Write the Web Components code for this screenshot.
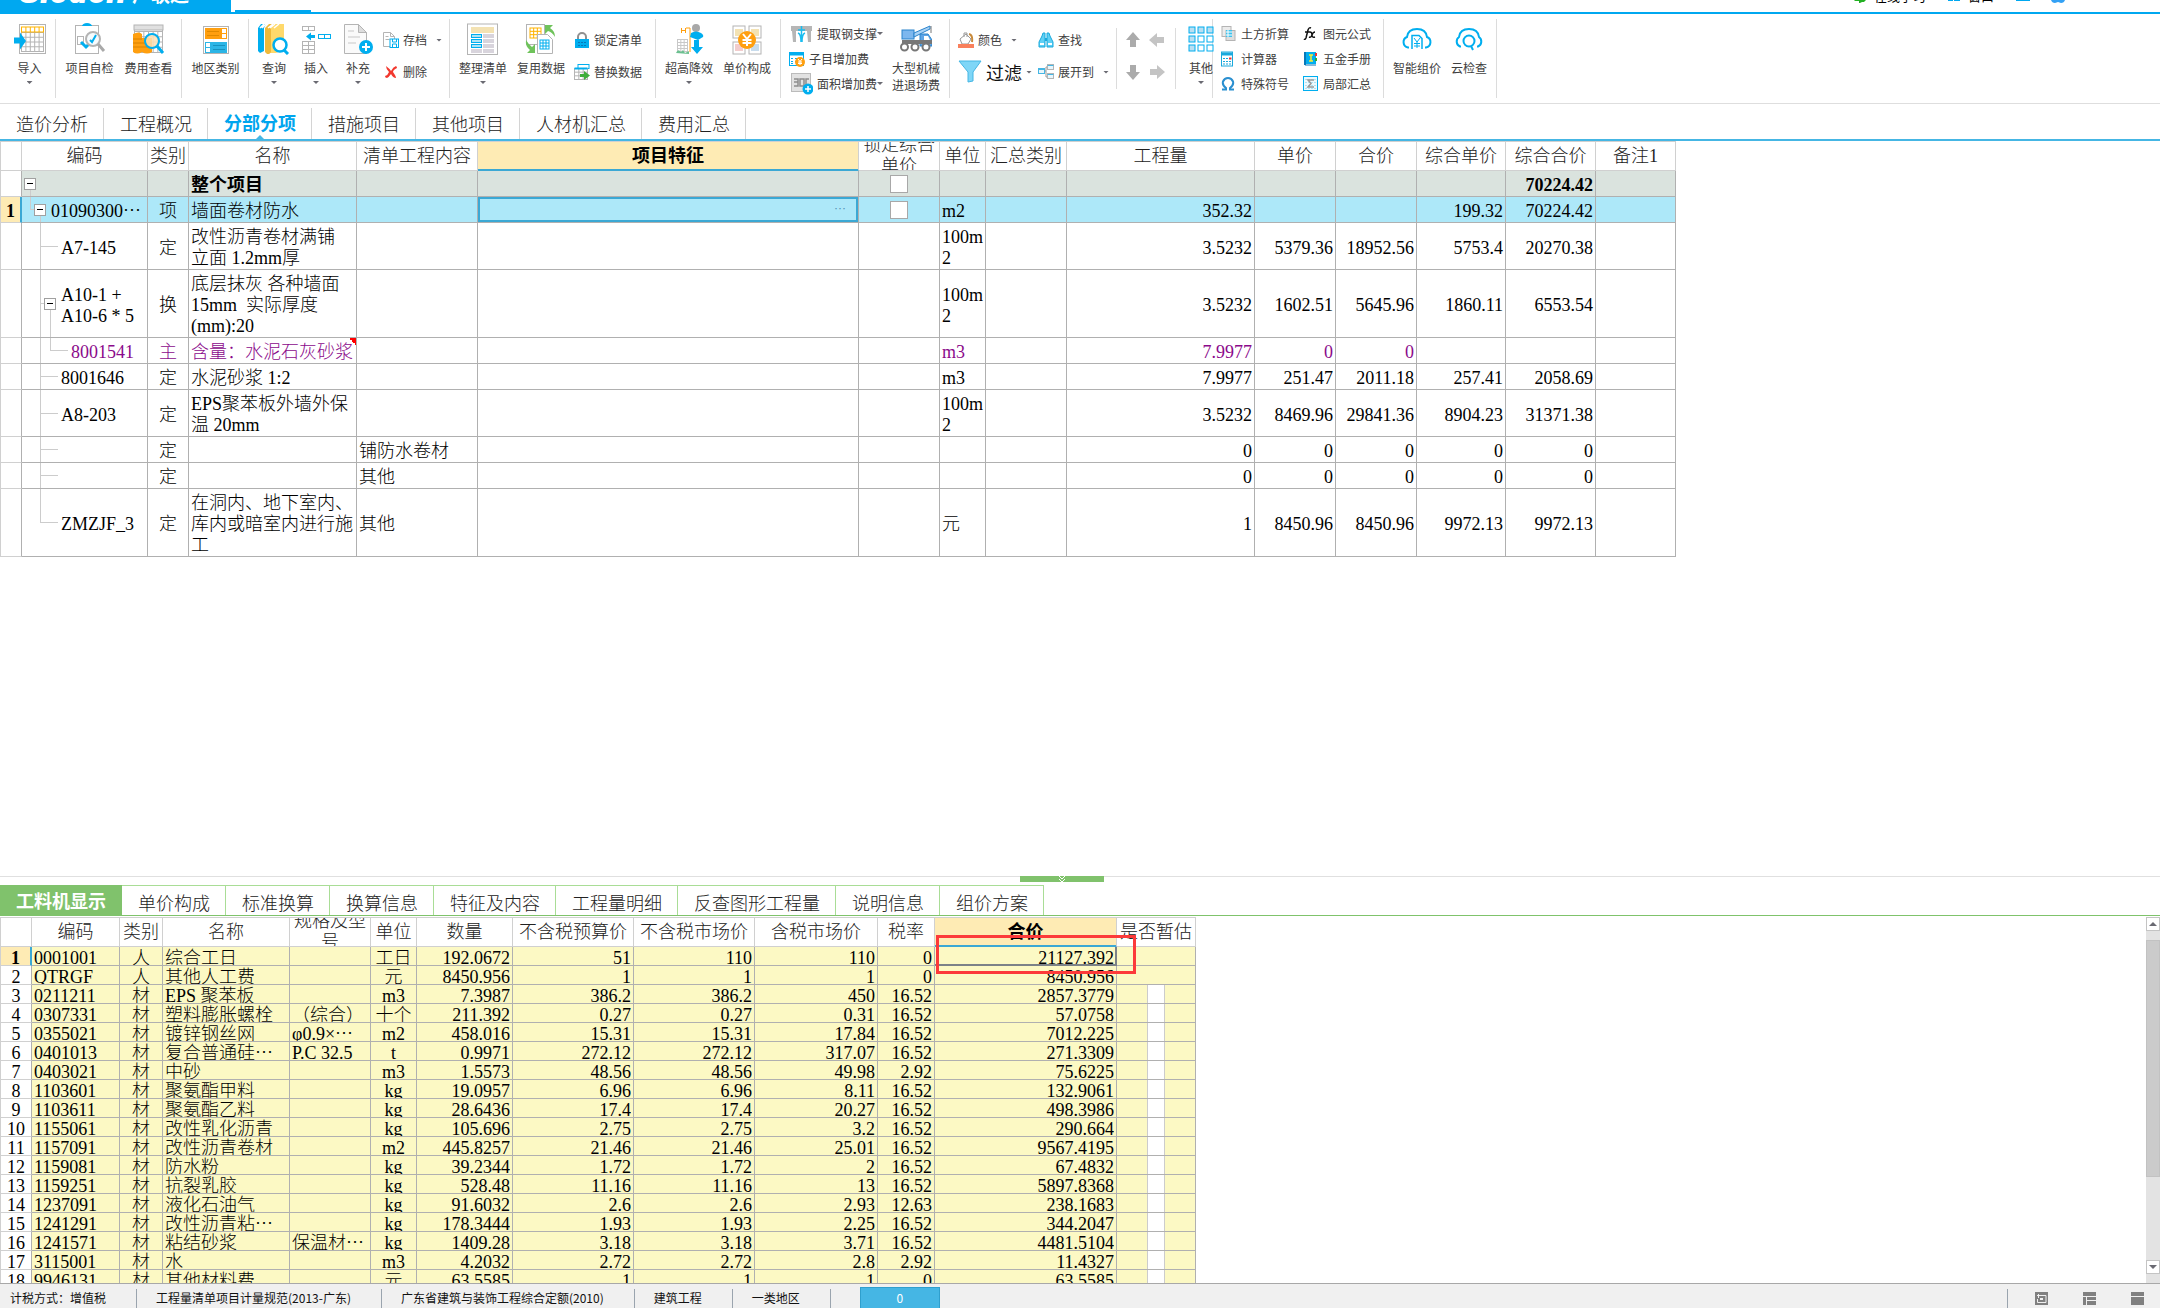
<!DOCTYPE html>
<html lang="zh-CN">
<head>
<meta charset="utf-8">
<title>分部分项</title>
<style>
html,body{height:100%}
body{margin:0;background:#fff;color:#000;font:12px/16px "Noto Sans CJK SC",sans-serif;overflow:hidden}
gb-app{height:100%}
</style>
</head>
<body>
<gb-app></gb-app>
<script>
const G='#b4b4b4',B='#00aeef',O='#ff9f0f',LB='#45b6e4',Y='#f3e2b3';
const grid=(x,y,w,h,nx,ny,c,f='#fff')=>{let s=`<rect x="${x}" y="${y}" width="${w}" height="${h}" fill="${f}" stroke="${c}"/>`;
  for(let i=1;i<nx;i++)s+=`<path d="M${x+w*i/nx} ${y}v${h}" stroke="${c}"/>`;
  for(let i=1;i<ny;i++)s+=`<path d="M${x} ${y+h*i/ny}h${w}" stroke="${c}"/>`;return s;};
const cells=(list,w,h)=>list.map(([x,y,s,f])=>`<rect x="${x}" y="${y}" width="${w}" height="${h}" fill="${f||'#fff'}" stroke="${s}"/>`).join('');
// Icon table: [width, height, markup]
const ICONS={
 import:[32,32,`<rect x="5.500" y="1.500" width="26" height="29" fill="#fff" stroke="${G}"/>`+grid(7.5,9.5,22,19,5,4,G)+grid(7.5,4,22,5,5,1,'#ffb400')+`<path d="M0 15h6v-5l6 8.500-6 8.500v-6H0z" transform="translate(0 -.5)" fill="${B}"/>`],
 check:[32,32,`<rect x="1.500" y="2.500" width="23" height="28" fill="#fff" stroke="${G}"/><path d="M8 3a5 3 0 0 1 10 0z" fill="${B}"/><rect x="3.500" y="13.500" width="6" height="8" fill="none" stroke="${G}"/><path d="M7 19l5 5 4-4" fill="none" stroke="${B}" stroke-width="3"/><circle cx="19" cy="16" r="7" fill="#f7fbfd" stroke="${G}" stroke-width="2"/><path d="M24 21l6 7" stroke="#a9a9a9" stroke-width="3"/><path d="M16 17l2 2 4-7" fill="none" stroke="${B}" stroke-width="2"/>`],
 fee:[32,32,`<rect x="1.500" y="2.500" width="28" height="27" fill="#fff" stroke="${G}"/>`+grid(1.5,8.5,28,21,6,4,G)+`<rect x="1" y="2" width="29" height="5" fill="#e0e0e0" stroke="${G}"/><path d="M0 11q6-3 9 0v18q-5 3-9 0zM9 15h10v14q-5 3-10 0z" fill="${O}"/><path d="M0 16h9M0 20h9M0 24h19M9 20h10" stroke="#d98200"/><circle cx="19" cy="18" r="7" fill="#fbe2b8" fill-opacity=".85" stroke="${B}" stroke-width="2"/><path d="M24 23l6 7" stroke="${B}" stroke-width="3"/>`],
 region:[32,32,`<rect x="3.500" y="3.500" width="25" height="27" fill="#fff" stroke="${G}"/><rect x="5" y="5" width="22" height="11" fill="${O}"/><rect x="21.500" y="5.500" width="5" height="10" fill="#fff" stroke="${O}"/><path d="M21 10.500h6" stroke="${O}"/><path d="M7 8.500h12M7 12.500h12" stroke="#e08a00"/><rect x="5" y="19" width="22" height="11" fill="#2bb5e6"/><rect x="5.500" y="19.500" width="5" height="10" fill="#fff" stroke="#2bb5e6"/><path d="M5 24.500h6" stroke="#2bb5e6"/><path d="M13 22.500h12M13 26.500h12" stroke="#1692c0"/>`],
 query:[32,32,`<path d="M0 5l3-4h5l-2 4v23l-4 2-2-2z" fill="${B}"/><path d="M7 5l4-4h6l-2 4v23l-4 3H9l-2-2z" fill="#f0b93a"/><path d="M13 5l4-4h9v25l-8 4h-5z" fill="#ffd96b"/><path d="M2 5l4-4M4 5l4-4M10 5l5-4M12 5l5-4M16 5l5-4" stroke="#fff" stroke-width="1.500"/><circle cx="22" cy="22" r="6.500" fill="#fff" stroke="${B}" stroke-width="2.500"/><path d="M26 27l4 4" stroke="${B}" stroke-width="3"/>`],
 insert:[32,32,cells([[2.5,3.5,G],[8.500,3.500,G]],6,4)+cells([[18.500,11.500,B],[24.500,11.500,B]],6,4)+cells([[2.500,18.500,G],[8.500,18.500,G],[2.500,22.500,G],[8.500,22.500,G],[2.500,26.500,G],[8.500,26.500,G]],6,4)+`<path d="M6 13.500l5-4v2.500h4v3h-4v2.500z" fill="${B}"/>`],
 supply:[32,32,`<path d="M2.500 1.500h14l8 8v21h-22z" fill="#fafafa" stroke="${G}"/><path d="M16.500 1.500v8h8z" fill="#ddd" stroke="${G}"/><path d="M6 8h6M6 14h12M6 20h8" stroke="#c8c8c8"/><circle cx="24" cy="24" r="7" fill="${B}"/><path d="M24 20v8M20 24h8" stroke="#fff" stroke-width="2"/>`],
 save:[16,16,`<path d="M.5.5h7l4 4v10H.5z" fill="#fff" stroke="${G}"/><path d="M7.500.5v4h4M2.500 4.500h3M2.500 7.500h4" fill="none" stroke="${G}"/><rect x="7" y="7" width="8.500" height="8.500" fill="#fff" stroke="${B}"/><path d="M9.500 7v3h4V7M9.500 15v-3h4v3" fill="none" stroke="${B}"/>`],
 del:[16,16,`<path d="M3 2q4 3 5 5 2-4 5-5 1 1 1 2-4 2-4 4 3 4 3 6-3 0-5-4-2 3-4 4-2 0-2-2 3-1 4-4-3-3-3-6z" fill="#f2382e"/>`],
 arrange:[32,32,`<rect x=".5" y="1" width="30" height="30.500" fill="#fff" stroke="${G}"/><rect x="4" y="4" width="23" height="6" fill="${Y}"/>`+cells([[4.500,11.500,B,'#ade3f5'],[4.500,16.500,B,'#ade3f5'],[4.500,21.500,B,'#ade3f5']],10,3)+`<path d="M16 13h11M16 18h11M16 23h11M16 28h11M4 28h11" stroke="#d8d4dc" stroke-width="4"/>`],
 reuse:[32,32,`<rect x="1.500" y="1.500" width="18" height="20" fill="#fff" stroke="${G}"/>`+grid(5,5,11,10,3,3,'#ffb400')+`<path d="M12.500 11.500h10l5 5v14h-15z" fill="#fff" stroke="${G}"/>`+grid(15,17,9,9,3,3,B)+`<path d="M20 2h8l-3 3q5 3 5 9-3-5-7-6l-3 3z" fill="#6fc35b"/><path d="M10 30H2l3-3q-5-4-4-10 3 5 6 7l3-3z" fill="#6fc35b"/>`],
 lock:[16,16,`<path d="M4 8V5a4 4 0 0 1 8 0v3" fill="none" stroke="#909090" stroke-width="2"/><rect x="1" y="7" width="14" height="9" fill="${B}"/><path d="M4 10.500h8M4 13.500h8" stroke="#0878b8" stroke-dasharray="2 1"/>`],
 replace:[16,16,`<rect x="4" y=".5" width="11" height="4" fill="#fff" stroke="${B}"/>`+grid(.5,4.500,13,11,3,3,G)+`<path d="M.5 4.500h13" stroke="${B}" stroke-width="2"/><path d="M6 10h4V7l6 4.500-6 4.500v-3H6z" fill="#3fae3a"/>`],
 high:[32,32,`<path d="M8.500 5v5M12.500 5v5M8.500 7.500h4M13 5h4v24" fill="none" stroke="#ff9f0f"/>`+grid(4.500,16.500,10,12,3,4,'#c8c8c8')+`<path d="M3 30q2-5 5-1l2-2 2 3 4-2v3z" fill="#6cc090"/><circle cx="23" cy="5" r="4" fill="#a8a8a8"/><path d="M18 10q5-3 10 0 3 2 2 4l-5 3-8-3z" fill="${B}"/><path d="M21 17h5v7h4l-6 7-6-7h3z" fill="${B}"/>`],
 compose:[32,32,cells([[2,3,G],[18,3,G],[2,19,G],[18,19,G]],12,12)+`<rect x="4" y="6" width="8" height="7" fill="${Y}"/><rect x="20" y="6" width="8" height="7" fill="${Y}"/><rect x="4" y="21" width="8" height="7" fill="#f2cccc"/><rect x="20" y="21" width="8" height="7" fill="#c8dced"/><circle cx="16" cy="17" r="9" fill="${O}"/><path d="M12 11l4 5 4-5M16 16v7M11.500 17h9M11.500 20h9" fill="none" stroke="#fff" stroke-width="2"/>`],
 steel:[24,18,`<path d="M2 1h21v5H2zM3 6h4v11H4zM18 6h4v11h-3z" fill="#b6b6b6"/><path d="M12.500 1v16M9 8q3 1 3 9M16 8q-3 1-3 9M9 5h7" stroke="#19bdf0" stroke-width="1.500" fill="none"/>`],
 subfee:[16,16,`<rect x=".5" y="1.500" width="14" height="13" fill="#fff" stroke="${B}"/><path d="M0 3h15" stroke="${B}" stroke-width="3"/><path d="M2 7.500h2M6 7.500h7M2 10.500h2M6 10.500h3M2 12.500h2" stroke="${B}"/><circle cx="11" cy="11" r="5" fill="${O}"/><path d="M9 8l2 2.500L13 8M11 10.500V14M9 11h4M9 12.500h4" fill="none" stroke="#fff"/>`],
 area:[24,22,`<rect x="2.500" y=".5" width="19" height="18" fill="#e2e2e2" stroke="#bbb"/><path d="M5 6h4v7H5M5 9h4M11 6h4v7h-4zM17 13V6h3" fill="none" stroke="#8d8d8d" stroke-width="1.500"/><circle cx="19" cy="16" r="5.500" fill="${B}"/><path d="M19 13v6M16 16h6" stroke="#fff" stroke-width="1.500"/>`],
 crane:[32,32,`<rect x="2" y="7" width="12" height="9" fill="#7db7ee" stroke="#2b83cc"/><path d="M14 10L30 3v3l-16 8z" fill="#a9d2f5" stroke="#2b83cc"/><path d="M31 3v7" stroke="#777"/><path d="M20 11h8l4 6v6H20z" fill="#5da4e6" stroke="#2b83cc"/><path d="M24 13h4l2 4h-6z" fill="#fff"/><path d="M2 19h30" stroke="#777" stroke-width="4"/><g fill="#fff" stroke="#777" stroke-width="2"><circle cx="4.500" cy="24" r="3.500"/><circle cx="15" cy="24" r="3.500"/><circle cx="26" cy="24" r="3.500"/></g>`],
 color:[16,16,`<path d="M2 7l6-5 5 5-3 5H4z" fill="#fff" stroke="#999"/><path d="M6 5V1h3v4" fill="none" stroke="#999"/><path d="M11 2q4 1 3 8" fill="none" stroke="#c98a3a" stroke-width="2"/><path d="M0 12h16v4H0z" fill="#f9805c"/>`],
 filter:[24,24,`<path d="M1 1h22l-8 11v9l-5 1V12z" fill="#7fd6f7" stroke="#45b6e4"/>`],
 find:[16,16,`<path d="M5 1h2v14H1V10l3-6zM11 1H9v14h6V10l-3-6z" fill="#5fd0f5" stroke="#1aa9dc"/><path d="M7 6h2v3H7z" fill="#1aa9dc"/><path d="M2 12h4M10 12h4" stroke="#fff" stroke-width="2"/>`],
 expand:[16,16,`<path d="M5 7h3M8 3v10M8 3h2M8 13h2" stroke="#999" fill="none"/>`+cells([[.5,4.500,LB,'#e8f6fc'],[9.500,.5,G,'#e8f6fc'],[9.500,9.500,G,'#e8f6fc']],6,5)+`<path d="M.5 5.500h6M9.500 1.500h6M9.500 10.500h6" stroke="#45b6e4"/>`],
 other:[26,26,cells([[1,1,B,'#b9dff2'],[10,1,B,'#b9dff2'],[19,1,B,'#b9dff2'],[1,10,B,'#b9dff2'],[10,10,B],[19,10,B],[1,19,B,'#b9dff2'],[10,19,B],[19,19,B]],6,6)],
 earth:[16,16,cells([[1,.5,G,'#ececec'],[5,4.500,G,'#dedede']],9,10)+`<rect x="5" y="4" width="6" height="7" fill="#3ec1ec"/><path d="M5 6h6M5 9h6M7 4v7" stroke="#fff"/>`],
 calc:[16,16,`<rect x=".5" y="1" width="11" height="14" fill="#fff" stroke="#1aa9dc"/><path d="M0 3h12" stroke="#1aa9dc" stroke-width="3"/><path d="M2 7.500h2m1 0h2M2 10.500h2m1 0h2m1 0h2M2 13h2m1 0h2m1 0h2" stroke="#1aa9dc"/><path d="M8 7.500h2.500" stroke="#e33" stroke-width="2"/>`],
 omega:[16,16,`<path d="M1 13.500h4V12Q1 9 2 5.500 3.500 2 7 2t5 3.500Q13 9 9 12v1.500h4" fill="none" stroke="#2a8fd0" stroke-width="2"/>`],
 fx:[16,16,`<path d="M8 2q-2-1-3 2L3 12q-1 2-2 1M2 6h5" fill="none" stroke="#111" stroke-width="1.500"/><path d="M7 6q2 0 2 3t3 2M12 6q-2 0-3 3t-3 2" fill="none" stroke="#111" stroke-width="1.500"/>`],
 book:[16,16,`<rect x="1" y="1" width="2" height="13" fill="#0878b8"/><rect x="3" y="1" width="10" height="12" fill="${B}"/><path d="M2 14h11" stroke="#0878b8"/><path d="M6 4h4M8 4v6M6 10h4" stroke="#f5ec3a" stroke-width="1.500"/><path d="M13 2v3" stroke="#e33" stroke-width="2"/><path d="M13 7v3" stroke="#3a3" stroke-width="2"/>`],
 sum:[16,16,`<rect x=".5" y=".5" width="14" height="14" fill="#eef9fd" stroke="${B}"/><path d="M2 3.500h11M2 6.500h11M2 9.500h11M2 12.500h11" stroke="#aee2f4" stroke-dasharray="2 1"/><path d="M11 4H5l3 3.500L5 11h6" fill="none" stroke="#999" stroke-width="1.500"/>`],
 aiprice:[32,32,`<path d="M8 24.500H7A5.500 5.500 0 0 1 6 14Q7 6 16 6t10 8a5.500 5.500 0 0 1-1 10.500h-1" fill="none" stroke="${B}" stroke-width="2"/><path d="M11 26V12.500h7l3 3V26" fill="none" stroke="${B}" stroke-width="1.500"/><path d="M13 15l3 4 3-4M16 19v6M13 20.500h6M13 23h6" fill="none" stroke="${B}"/>`],
 cloud:[32,32,`<path d="M8 23.500H7A5.500 5.500 0 0 1 6 14Q7 6 16 6t10 8a5.500 5.500 0 0 1-1 9.500h-1" fill="none" stroke="${B}" stroke-width="2"/><circle cx="16" cy="18" r="5.500" fill="none" stroke="${B}" stroke-width="2"/><path d="M18 23l2 4" stroke="${B}" stroke-width="2"/>`],
 up:[16,16,`<path d="M8 0l7 8h-4v7H5V8H1z" fill="#ababab"/>`],
 down:[16,16,`<path d="M8 16l7-8h-4V1H5v7H1z" fill="#ababab"/>`],
 left:[16,16,`<path d="M0 8l8-7v4h7v6H8v4z" fill="#c4c4c4"/>`],
 right:[16,16,`<path d="M16 8L8 1v4H1v6h7v4z" fill="#c4c4c4"/>`],
 win:[13,13,`<path d="M0 0h13v13H0z" fill="#808080"/><path d="M2 3.500h4M3.500 2v4M6 3.500h5v7H2.500V7" fill="none" stroke="#f0f0f0"/><path d="M5 6h3v2H5z" fill="#f0f0f0"/>`],
 outline:[13,13,`<path d="M0 0h13v4H0zM0 5h3v8H0zM4 5h9v3H4zM4 9h9v4H4z" fill="#808080"/>`],
 panel:[13,13,`<path d="M0 0h13v4H0zM0 5h13v8H0z" fill="#808080"/>`]
};
const icon=n=>{const[w,h,m]=ICONS[n];return `<svg width="${w}" height="${h}" viewBox="0 0 ${w} ${h}" aria-hidden="true">${m}</svg>`;};
const CSS=`*{box-sizing:border-box}button{font:inherit;color:inherit;background:none;border:0;margin:0;padding:0;white-space:nowrap}svg{display:block;flex:none}`;
const SONG=`"Liberation Serif","Noto Sans CJK SC",serif`;
const define=(name,render)=>customElements.define(name,class extends HTMLElement{
  connectedCallback(){if(!this.shadowRoot)this.attachShadow({mode:'open'}).innerHTML=`<style>${CSS}</style>`+render(this);}
});

define('gb-tool',el=>{
  const n=el.getAttribute('icon'),caret=el.hasAttribute('caret')?'<i></i>':'';
  return `<style>
  :host{display:block;flex:none;color:#404040}
  i{width:6px;height:3px;flex:none;background:#6a6a72;clip-path:polygon(0 0,100% 0,50% 100%)}
  button{display:flex;align-items:center}
  :host([big]) button{flex-direction:column;width:var(--w,58px);padding-top:4px}
  :host([big]) .ic{height:32px;display:flex;align-items:center}
  :host([big]) .tx{margin-top:4px;line-height:17px}
  :host([big]) i{margin-top:5px}
  :host(:not([big])) button{height:var(--rh,32px);gap:4px}
  :host([tight]) button{gap:0}
  :host([tight]) .tx{margin-left:4px}
  :host([spread]) i{margin-left:5px}
  :host([large]) .tx{font-size:18px;color:#111}
  </style><button type="button" ${el.title?`aria-label="${el.title}"`:''}><span class="ic">${icon(n)}</span><span class="tx"><slot></slot></span>${caret}</button>`;
});
define('gb-group',()=>`<style>
  :host{display:flex;flex:none;height:79px;padding-left:4px;border-right:1px solid #dcdcdc}
  :host([short]){border:0;background:linear-gradient(#dcdcdc,#dcdcdc) 100% 9px/1px 61px no-repeat}
</style><slot></slot>`);
define('gb-stack',el=>`<style>:host{display:flex;flex-direction:column;padding:var(--pt,5px) 0 0 4px;flex:none}</style><slot></slot>`);

define('gb-titlebar',()=>`<style>
  :host{display:flex;height:14px;flex:none;border-bottom:2px solid #00a8f0;overflow:hidden;align-items:flex-end}
  .brand{display:flex;align-items:flex-end;width:231px;height:12px;background:#00a8f0;color:#fff;padding-left:17px;overflow:hidden;gap:6px}
  b{font:italic 900 35px/12px Roboto,sans-serif}
  .cn{font-size:19px;font-weight:700;line-height:12px}
  b,.cn{height:26px;white-space:nowrap}
  .cn{height:24px}
  .page{width:76px;height:2px;margin-left:4px;background:#00a8f0}
  .links{margin-left:auto;display:flex;align-items:flex-end;height:12px;overflow:hidden;padding-right:95px;font-size:13px}
  .links span{height:24px;line-height:16px;margin:0 22px 0 8px}
  .links svg{align-self:flex-start}
  </style><div class="brand"><b>Glodon</b><span class="cn">广联达</span></div><div class="page"></div>
  <div class="links"><svg width="12" height="4"><path d="M0 0h12l-2 2H8l-2 1H5V1H1z" fill="#22b022"/></svg><span>在线学习</span>
  <svg width="12" height="2"><path d="M0 0h5v1H0zM6 0h6v1H6z" fill="#00a8f0"/></svg><span>窗口</span>
  <svg width="35" height="2"><path d="M0 0h14v1H0z" fill="#00a8f0"/></svg><svg width="14" height="4"><path d="M0 0h14q-1 3-4 3L7 2 4 3Q1 3 0 0z" fill="#33a1f5"/></svg></div>`);

define('gb-ribbon',()=>`<style>
  :host{display:flex;height:90px;flex:none;padding:5px 0;border-bottom:1px solid #dedede}
  .c3{--rh:25px;--pt:2px}
  .w42{--w:42px}.w59{--w:59px}
  .push{margin-left:auto}
  .arrows{display:grid;grid-template-columns:24px 24px;row-gap:16px;align-content:start;padding:13px 0 0 4px}
  .arrows gb-tool{--rh:16px}
  </style>
  <gb-group style="--w:51px"><gb-tool big icon="import" caret>导入</gb-tool></gb-group>
  <gb-group class="w59" style="padding-right:3px"><gb-tool big icon="check">项目自检</gb-tool><gb-tool big icon="fee">费用查看</gb-tool></gb-group>
  <gb-group class="w59" style="padding-right:3px"><gb-tool big icon="region">地区类别</gb-tool></gb-group>
  <gb-group class="w42" style="width:201px"><gb-tool big icon="query" caret>查询</gb-tool><gb-tool big icon="insert" caret>插入</gb-tool><gb-tool big icon="supply" caret>补充</gb-tool>
    <gb-stack><gb-tool icon="save" caret spread>存档</gb-tool><gb-tool icon="del">删除</gb-tool></gb-stack></gb-group>
  <gb-group style="width:206px"><gb-tool big icon="arrange" caret>整理清单</gb-tool><gb-tool big icon="reuse">复用数据</gb-tool>
    <gb-stack><gb-tool icon="lock">锁定清单</gb-tool><gb-tool icon="replace">替换数据</gb-tool></gb-stack></gb-group>
  <gb-group style="padding-right:4px"><gb-tool big icon="high" caret>超高降效</gb-tool><gb-tool big icon="compose">单价构成</gb-tool></gb-group>
  <gb-group class="c3" style="width:169px;padding-right:4px"><gb-stack><gb-tool icon="steel" caret tight>提取钢支撑</gb-tool><gb-tool icon="subfee">子目增加费</gb-tool><gb-tool icon="area" caret tight>面积增加费</gb-tool></gb-stack>
    <gb-tool class="push" big icon="crane">大型机械<br>进退场费</gb-tool></gb-group>
  <gb-group style="width:84px;border:0"><gb-stack><gb-tool icon="color" caret spread>颜色</gb-tool><gb-tool icon="filter" caret large>过滤</gb-tool></gb-stack></gb-group>
  <gb-group short style="width:83px;padding:0"><gb-stack><gb-tool icon="find">查找</gb-tool><gb-tool icon="expand" caret spread>展开到</gb-tool></gb-stack></gb-group>
  <gb-group short style="width:59px"><div class="arrows"><gb-tool icon="up" title="上移"></gb-tool><gb-tool icon="left" title="升级"></gb-tool><gb-tool icon="down" title="下移"></gb-tool><gb-tool icon="right" title="降级"></gb-tool></div></gb-group>
  <gb-group style="--w:26px;width:37px;padding-left:12px"><gb-tool big icon="other" caret>其他</gb-tool></gb-group>
  <gb-group class="c3" style="width:171px"><gb-stack><gb-tool icon="earth">土方折算</gb-tool><gb-tool icon="calc">计算器</gb-tool><gb-tool icon="omega">特殊符号</gb-tool></gb-stack>
    <gb-stack style="padding-left:14px"><gb-tool icon="fx">图元公式</gb-tool><gb-tool icon="book">五金手册</gb-tool><gb-tool icon="sum">局部汇总</gb-tool></gb-stack></gb-group>
  <gb-group style="padding-right:4px"><gb-tool big icon="aiprice">智能组价</gb-tool><gb-tool big icon="cloud" style="--w:46px">云检查</gb-tool></gb-group>`);

define('gb-tabs',el=>`<style>
  :host{display:flex;flex:none;font:18px/21px "Noto Sans CJK SC",sans-serif;color:#222;font-weight:300}
  button{position:relative;border-right:1px solid;padding:0 15px 0 16px}
  :host([kind=page]){height:37px;border-bottom:2px solid ${LB};padding-top:4px}
  :host([kind=page]) button{border-color:#d4d4d4;height:31px}
  :host([kind=page]) .on{color:#00a5ee;font-weight:700;padding-bottom:3px}
  :host([kind=page]) .on::after{content:"";position:absolute;left:50%;bottom:0;margin-left:-4px;border:4px solid transparent;border-top:0;border-bottom-color:${LB}}
  :host([kind=detail]){height:31px;border-bottom:1px solid #7fc36b}
  :host([kind=detail]) button{border-color:#a9dd96;border-top:1px solid #a9dd96;padding-top:3px}
  :host([kind=detail]) .on{background:#80c26c;color:#fff;border-color:#80c26c;font-weight:700;padding-top:0}
  </style>`+el.getAttribute('items').split(',').map((t,i)=>`<button type="button" role="tab" class="${i==el.getAttribute('active')?'on':''}">${t}</button>`).join(''));

const txt=s=>String(s).replace(/…/g,'<span class="el">…</span>');
const GRID=`
  :host{display:block;font:18px/21px ${SONG};font-weight:300}
  table{border-collapse:separate;border-spacing:0;table-layout:fixed}
  th,td{padding:0 2px;border:solid #b0b0b0;border-width:0 1px 1px 0;text-align:left;overflow:hidden;font-weight:inherit}
  th{border-color:#d0d0d0;border-top-width:1px;text-align:center;height:30px;color:#222;padding:0}
  th>div{height:28px;display:flex;align-items:center;justify-content:center;overflow:hidden}
  th.hot{background:#feebb4;color:#000;font-weight:700;border-bottom-color:#3ba8d4;box-shadow:inset 0 -1px #3ba8d4}
  tr>:first-child{border-left:1px solid #d0d0d0;border-bottom-color:#d0d0d0;text-align:center}
  .r{text-align:right;padding-right:2px}.c{text-align:center}
  .el{font-family:"Noto Sans CJK SC";line-height:0}
  .cur{background:#feebb4!important;font-weight:700;border-right:2px solid #3ba8d4!important}
  input{appearance:none;display:block;margin:0 auto;width:18px;height:18px;background:#fff;border:1px solid #a8a8a8}
`;
const colgroup=w=>`<table style="width:${w.reduce((a,b)=>a+b)}px"><colgroup>${w.map(x=>`<col style="width:${x}px">`).join('')}</colgroup>`;

const ITEMS=[
 ['t0','','','整个项目','','','chk','','','','','','','70224.42'],
 ['t1','01090300…','项','墙面卷材防水','','more','chk','m2','','352.32','','','199.32','70224.42'],
 ['t2','A7-145','定','改性沥青卷材满铺\n立面 1.2mm厚','','','','100m\n2','','3.5232','5379.36','18952.56','5753.4','20270.38'],
 ['t3','A10-1 +\nA10-6 * 5','换','底层抹灰 各种墙面\n15mm  实际厚度\n(mm):20','','','','100m\n2','','3.5232','1602.51','5645.96','1860.11','6553.54'],
 ['t4','8001541','主','含量：水泥石灰砂浆','','','','m3','','7.9977','0','0','',''],
 ['t2','8001646','定','水泥砂浆 1:2','','','','m3','','7.9977','251.47','2011.18','257.41','2058.69'],
 ['t2','A8-203','定','EPS聚苯板外墙外保\n温 20mm','','','','100m\n2','','3.5232','8469.96','29841.36','8904.23','31371.38'],
 ['t2','','定','','铺防水卷材','','','','','0','0','0','0','0'],
 ['t2','','定','','其他','','','','','0','0','0','0','0'],
 ['t2 t9','ZMZJF_3','定','在洞内、地下室内、\n库内或暗室内进行施\n工','其他','','','元','','1','8450.96','8450.96','9972.13','9972.13']];
const gl=(...p)=>'background-image:'+p.map(()=>'linear-gradient(#ccc,#ccc)').join()+';background-repeat:no-repeat;background-position:'+p.map(a=>a[0]).join()+';background-size:'+p.map(a=>a[1]).join();
define('gb-items',()=>{
  const heads=['','编码','类别','名称','清单工程内容','项目特征','锁定综合单价','单位','汇总类别','工程量','单价','合价','综合单价','综合合价','备注1'];
  const body=ITEMS.map((r,i)=>{
    const [t,...c]=r;
    const box=/^t[013]$/.test(t)?'<button type="button" aria-label="折叠"></button>':'';
    return `<tr class="${i==0?'root':i==1?'sel':i==4?'main':''}"><td class="${i==1?'cur':''}">${i==1?1:''}</td>`+c.map((v,k)=>{
      if(k==0)return `<td class="tree ${t}"><div>${box}<span>${txt(v)}</span></div></td>`;
      if(v=='more')return `<td class="focus"><button type="button" class="more" aria-label="更多">⋯</button></td>`;
      if(v=='chk')return `<td class="chk"><input type="checkbox" aria-label="锁定综合单价"></td>`;
      return `<td class="${k==1?'c':k>=8?'r':''}${i==4&&k==2?' note':''}">${v}</td>`;}).join('')+'<td></td></tr>';}).join('');
  return `<style>${GRID}
  td{padding:4px 2px 0;white-space:pre}
  td:not(:first-child):not(.cur){height:26px}
  .chk{padding:2px}
  .root{font-weight:700}.root td:not(:first-child){background-color:#dae3de}
  .sel td{background-color:#ade8f9}
  .main{color:#8b0a8b}
  .tree{--l:39px;padding:4px 0 0}
  .tree>div{display:flex;align-items:center;padding-left:var(--l)}
  .tree button{width:12px;height:12px;margin:0 5px 4px -17px;border:1px solid #a0a0a0;background:linear-gradient(#000,#000) center/6px 1px no-repeat #fff;flex:none}
  .t0{--l:19px;${gl(['8px 100%','1px 50%'])}}
  .t1{--l:29px;${gl(['8px 0','1px 50%'],['8px 50%','5px 1px'],['18px 100%','1px 50%'])}}
  .t2{${gl(['18px 0','1px 100%'],['18px 50%','18px 1px'])}}
  .t3{${gl(['18px 0','1px 100%'],['18px 50%','5px 1px'],['28px 100%','1px 50%'])}}
  .t4{--l:49px;${gl(['18px 0','1px 100%'],['28px 0','1px 50%'],['28px 50%','18px 1px'])}}
  .t9{background-size:1px 50%,18px 1px}
  .note{background:linear-gradient(45deg,transparent 50%,#f00 50%) 100% 0/7px 7px no-repeat}
  .focus{box-shadow:inset 0 0 0 2px #3ba8d4;text-align:right;padding:0 2px;vertical-align:middle;line-height:12px;font-size:12px}
  .more{color:#4a8ab0;padding-right:10px}
  </style>${colgroup([22,126,41,168,121,381,81,46,81,188,81,81,89,90,80])}<thead><tr>${heads.map((h,i)=>`<th class="${i==5?'hot':''}"><div>${h}</div></th>`).join('')}</tr></thead><tbody>${body}</tbody></table>`;
});

const MATERIALS=`0001001|人|综合工日||工日|192.0672|51|110|110|0|21127.392
QTRGF|人|其他人工费||元|8450.956|1|1|1|0|8450.956
0211211|材|EPS 聚苯板||m3|7.3987|386.2|386.2|450|16.52|2857.3779
0307331|材|塑料膨胀螺栓|（综合）|十个|211.392|0.27|0.27|0.31|16.52|57.0758
0355021|材|镀锌钢丝网|φ0.9×…|m2|458.016|15.31|15.31|17.84|16.52|7012.225
0401013|材|复合普通硅…|P.C 32.5|t|0.9971|272.12|272.12|317.07|16.52|271.3309
0403021|材|中砂||m3|1.5573|48.56|48.56|49.98|2.92|75.6225
1103601|材|聚氨酯甲料||kg|19.0957|6.96|6.96|8.11|16.52|132.9061
1103611|材|聚氨酯乙料||kg|28.6436|17.4|17.4|20.27|16.52|498.3986
1155061|材|改性乳化沥青||kg|105.696|2.75|2.75|3.2|16.52|290.664
1157091|材|改性沥青卷材||m2|445.8257|21.46|21.46|25.01|16.52|9567.4195
1159081|材|防水粉||kg|39.2344|1.72|1.72|2|16.52|67.4832
1159251|材|抗裂乳胶||kg|528.48|11.16|11.16|13|16.52|5897.8368
1237091|材|液化石油气||kg|91.6032|2.6|2.6|2.93|12.63|238.1683
1241291|材|改性沥青粘…||kg|178.3444|1.93|1.93|2.25|16.52|344.2047
1241571|材|粘结砂浆|保温材…|kg|1409.28|3.18|3.18|3.71|16.52|4481.5104
3115001|材|水||m3|4.2032|2.72|2.72|2.8|2.92|11.4327
9946131|材|其他材料费||元|63.5585|1|1|1|0|63.5585`.split('\n').map(l=>l.split('|'));
define('gb-materials',()=>{
  const heads=['','编码','类别','名称','规格及型号','单位','数量','不含税预算价','不含税市场价','含税市场价','税率','合价','是否暂估'];
  const body=MATERIALS.map((r,i)=>`<tr><td class="${i?'':'cur'}"><div>${i+1}</div></td>`+r.map((v,k)=>`<td class="${k==1||k==4?'c':k>=5?'r':''}${!i&&k==10?' focus':''}"><div>${txt(v)}</div></td>`).join('')+`<td>${i>1?'<input type="checkbox" aria-label="是否暂估">':''}</td></tr>`).join('');
  return `<style>${GRID}
  :host{position:relative}
  td{height:19px;background:#fcf9c4;white-space:pre}
  td>div{height:18px;line-height:22px;overflow:hidden}
  td:first-child{background:#fff}
  input{border-color:#ccc;border-width:0 1px}
  .focus{box-shadow:inset 0 -1px #7c8288,inset -1px 0 #7c8288;border-color:#7c8288}
  .mark{position:absolute;left:936px;top:18px;width:200px;height:39px;border:3px solid #fc3a3a}
  </style>${colgroup([32,88,43,127,81,46,96,121,121,123,57,182,79])}<thead><tr>${heads.map((h,i)=>`<th class="${i==11?'hot':''}"><div>${h}</div></th>`).join('')}</tr></thead><tbody>${body}</tbody></table><div class="mark"></div>`;
});

define('gb-scrollbar',()=>`<style>
  :host{display:flex;flex-direction:column;width:14px;flex:none;background:#e3e3e3;padding-bottom:9px}
  button{height:14px;flex:none;background:#fff;border:1px solid #c4c4c4;display:flex;align-items:center;justify-content:center}
  button svg{fill:#6a6a72}
  .track{flex:1;padding-top:9px}.thumb{height:74%;background:#cbcbcb;border:1px solid #c2c2c2}
  </style><button type="button" aria-label="向上"><svg width="8" height="4"><path d="M0 4L4 0l4 4z"/></svg></button><div class="track"><div class="thumb"></div></div><button type="button" aria-label="向下"><svg width="8" height="4"><path d="M0 0l4 4 4-4z"/></svg></button>`);

define('gb-status',()=>`<style>
  :host{display:flex;height:25px;flex:none;background:#f0f0f0;border-top:1px solid #a8a8a8;font-size:12px;color:#111;align-items:flex-end}
  span{height:19px;line-height:17px;padding:0 30px 0 19px;border-right:1px solid #9aa4ae;white-space:nowrap}
  span:first-of-type{padding-left:10px}
  output{width:80px;height:21px;margin-left:29px;background:${LB};border:1px solid #2f9fcd;border-bottom:0;color:#fff;text-align:center;line-height:20px}
  .views{margin-left:auto;display:flex;gap:35px;height:19px;align-items:center;padding:0 16px 0 27px;border-left:1px solid #9aa4ae}
  </style><span>计税方式：增值税</span><span>工程量清单项目计量规范(2013-广东)</span><span>广东省建筑与装饰工程综合定额(2010)</span><span>建筑工程</span><span>一类地区</span><output>0</output>
  <div class="views">${['win','outline','panel'].map((n,i)=>`<button type="button" aria-label="视图${i+1}">${icon(n)}</button>`).join('')}</div>`);

define('gb-app',()=>`<style>
  :host{display:flex;flex-direction:column}
  main{flex:1;min-height:0;overflow:hidden}
  .split{height:9px;flex:none;border-top:1px solid #e0e0e0;display:flex}
  .split button{width:84px;height:6px;margin:-1px 0 0 1020px;background:#80c26c;display:flex;justify-content:center}
  .low{height:367px;flex:none;display:flex;overflow:hidden;padding-top:1px}
  gb-materials{flex:1}
  </style>
  <gb-titlebar></gb-titlebar><gb-ribbon></gb-ribbon>
  <gb-tabs kind="page" active="2" items="造价分析,工程概况,分部分项,措施项目,其他项目,人材机汇总,费用汇总"></gb-tabs>
  <main><gb-items></gb-items></main>
  <div class="split"><button type="button" aria-label="收起"><svg width="8" height="6"><path d="M1 0l3 3 3-3M1 3l3 3 3-3" fill="none" stroke="#fff"/></svg></button></div>
  <gb-tabs kind="detail" active="0" items="工料机显示,单价构成,标准换算,换算信息,特征及内容,工程量明细,反查图形工程量,说明信息,组价方案"></gb-tabs>
  <div class="low"><gb-materials></gb-materials><gb-scrollbar></gb-scrollbar></div>
  <gb-status></gb-status>`);
</script>
</body>
</html>
